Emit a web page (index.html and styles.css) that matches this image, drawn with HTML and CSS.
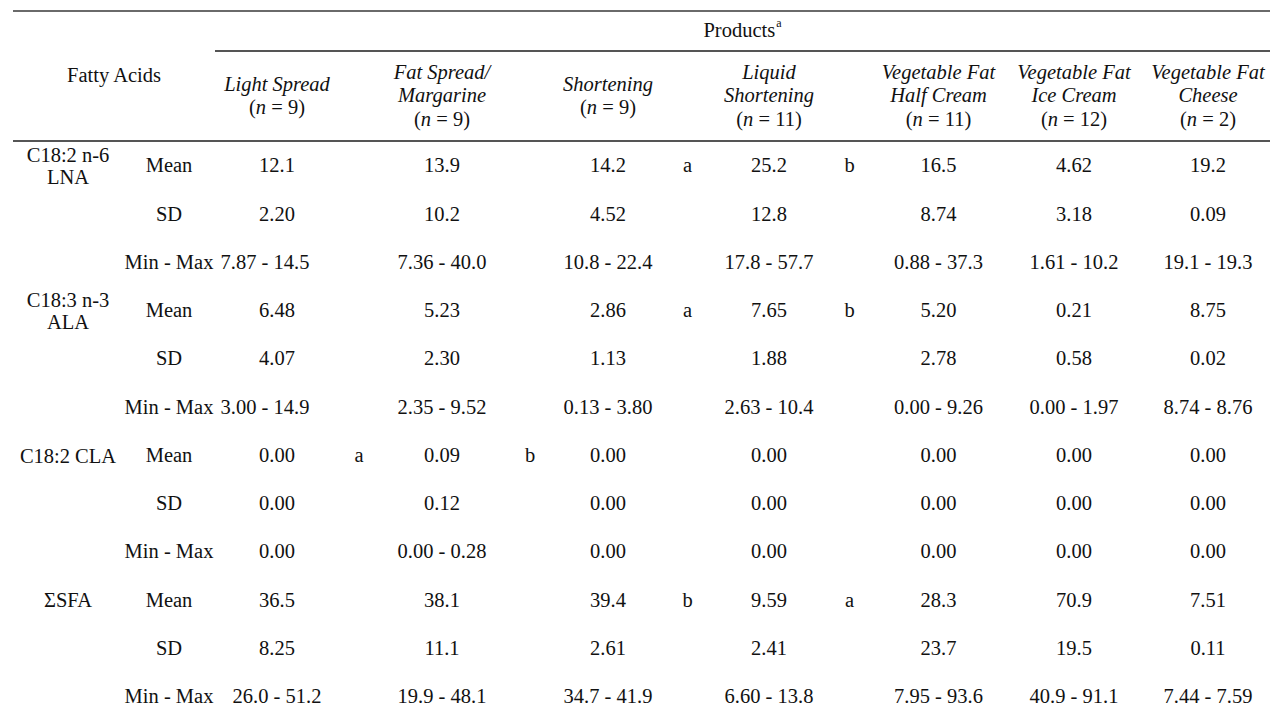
FILE: index.html
```html
<!DOCTYPE html>
<html lang="en">
<head>
<meta charset="utf-8">
<title>Fatty acids by product</title>
<link rel="stylesheet" href="styles.css">
</head>
<body>
<div class="grid">
  <div class="cell hd fatty">Fatty Acids</div>
  <div class="cell products">Products<span class="sup">a</span></div>

  <div class="cell hd"><span><em>Light Spread</em><br>(<em>n</em> = 9)</span></div>
  <div class="cell hd"></div>
  <div class="cell hd"><span><em>Fat Spread/</em><br><em>Margarine</em><br>(<em>n</em> = 9)</span></div>
  <div class="cell hd"></div>
  <div class="cell hd"><span><em>Shortening</em><br>(<em>n</em> = 9)</span></div>
  <div class="cell hd"></div>
  <div class="cell hd"><span><em>Liquid</em><br><em>Shortening</em><br>(<em>n</em> = 11)</span></div>
  <div class="cell hd"></div>
  <div class="cell hd"><span><em>Vegetable Fat</em><br><em>Half Cream</em><br>(<em>n</em> = 11)</span></div>
  <div class="cell hd"><span><em>Vegetable Fat</em><br><em>Ice Cream</em><br>(<em>n</em> = 12)</span></div>
  <div class="cell hd"><span><em>Vegetable Fat</em><br><em>Cheese</em><br>(<em>n</em> = 2)</span></div>

  <!-- C18:2 n-6 LNA -->
  <div class="cell label">C18:2 n-6<br>LNA</div>
  <div class="cell">Mean</div>
  <div class="cell">12.1</div><div class="cell"></div>
  <div class="cell">13.9</div><div class="cell"></div>
  <div class="cell">14.2</div><div class="cell">a</div>
  <div class="cell">25.2</div><div class="cell">b</div>
  <div class="cell">16.5</div><div class="cell">4.62</div><div class="cell">19.2</div>

  <div class="cell"></div>
  <div class="cell">SD</div>
  <div class="cell">2.20</div><div class="cell"></div>
  <div class="cell">10.2</div><div class="cell"></div>
  <div class="cell">4.52</div><div class="cell"></div>
  <div class="cell">12.8</div><div class="cell"></div>
  <div class="cell">8.74</div><div class="cell">3.18</div><div class="cell">0.09</div>

  <div class="cell"></div>
  <div class="cell">Min - Max</div>
  <div class="cell shift">7.87 - 14.5</div><div class="cell"></div>
  <div class="cell">7.36 - 40.0</div><div class="cell"></div>
  <div class="cell">10.8 - 22.4</div><div class="cell"></div>
  <div class="cell">17.8 - 57.7</div><div class="cell"></div>
  <div class="cell">0.88 - 37.3</div><div class="cell">1.61 - 10.2</div><div class="cell">19.1 - 19.3</div>

  <!-- C18:3 n-3 ALA -->
  <div class="cell label">C18:3 n-3<br>ALA</div>
  <div class="cell">Mean</div>
  <div class="cell">6.48</div><div class="cell"></div>
  <div class="cell">5.23</div><div class="cell"></div>
  <div class="cell">2.86</div><div class="cell">a</div>
  <div class="cell">7.65</div><div class="cell">b</div>
  <div class="cell">5.20</div><div class="cell">0.21</div><div class="cell">8.75</div>

  <div class="cell"></div>
  <div class="cell">SD</div>
  <div class="cell">4.07</div><div class="cell"></div>
  <div class="cell">2.30</div><div class="cell"></div>
  <div class="cell">1.13</div><div class="cell"></div>
  <div class="cell">1.88</div><div class="cell"></div>
  <div class="cell">2.78</div><div class="cell">0.58</div><div class="cell">0.02</div>

  <div class="cell"></div>
  <div class="cell">Min - Max</div>
  <div class="cell shift">3.00 - 14.9</div><div class="cell"></div>
  <div class="cell">2.35 - 9.52</div><div class="cell"></div>
  <div class="cell">0.13 - 3.80</div><div class="cell"></div>
  <div class="cell">2.63 - 10.4</div><div class="cell"></div>
  <div class="cell">0.00 - 9.26</div><div class="cell">0.00 - 1.97</div><div class="cell">8.74 - 8.76</div>

  <!-- C18:2 CLA -->
  <div class="cell label">C18:2 CLA</div>
  <div class="cell">Mean</div>
  <div class="cell">0.00</div><div class="cell">a</div>
  <div class="cell">0.09</div><div class="cell">b</div>
  <div class="cell">0.00</div><div class="cell"></div>
  <div class="cell">0.00</div><div class="cell"></div>
  <div class="cell">0.00</div><div class="cell">0.00</div><div class="cell">0.00</div>

  <div class="cell"></div>
  <div class="cell">SD</div>
  <div class="cell">0.00</div><div class="cell"></div>
  <div class="cell">0.12</div><div class="cell"></div>
  <div class="cell">0.00</div><div class="cell"></div>
  <div class="cell">0.00</div><div class="cell"></div>
  <div class="cell">0.00</div><div class="cell">0.00</div><div class="cell">0.00</div>

  <div class="cell"></div>
  <div class="cell">Min - Max</div>
  <div class="cell">0.00</div><div class="cell"></div>
  <div class="cell">0.00 - 0.28</div><div class="cell"></div>
  <div class="cell">0.00</div><div class="cell"></div>
  <div class="cell">0.00</div><div class="cell"></div>
  <div class="cell">0.00</div><div class="cell">0.00</div><div class="cell">0.00</div>

  <!-- ΣSFA -->
  <div class="cell label">ΣSFA</div>
  <div class="cell">Mean</div>
  <div class="cell">36.5</div><div class="cell"></div>
  <div class="cell">38.1</div><div class="cell"></div>
  <div class="cell">39.4</div><div class="cell">b</div>
  <div class="cell">9.59</div><div class="cell">a</div>
  <div class="cell">28.3</div><div class="cell">70.9</div><div class="cell">7.51</div>

  <div class="cell"></div>
  <div class="cell">SD</div>
  <div class="cell">8.25</div><div class="cell"></div>
  <div class="cell">11.1</div><div class="cell"></div>
  <div class="cell">2.61</div><div class="cell"></div>
  <div class="cell">2.41</div><div class="cell"></div>
  <div class="cell">23.7</div><div class="cell">19.5</div><div class="cell">0.11</div>

  <div class="cell"></div>
  <div class="cell">Min - Max</div>
  <div class="cell">26.0 - 51.2</div><div class="cell"></div>
  <div class="cell">19.9 - 48.1</div><div class="cell"></div>
  <div class="cell">34.7 - 41.9</div><div class="cell"></div>
  <div class="cell">6.60 - 13.8</div><div class="cell"></div>
  <div class="cell">7.95 - 93.6</div><div class="cell">40.9 - 91.1</div><div class="cell">7.44 - 7.59</div>
</div>
</body>
</html>
```

FILE: styles.css
```css
html, body {
  margin: 0;
  padding: 0;
  background: #ffffff;
}

body {
  font-family: "Liberation Serif", "Times New Roman", serif;
  font-size: 20.5px;
  line-height: 23.5px;
  color: #111111;
}

.grid {
  display: grid;
  width: 1257px;
  margin: 10px 0 0 13px;
  grid-template-columns: 110px 92px 124px 40px 126px 50px 106px 53px 110px 51px 127px 144px 124px;
  grid-template-rows: 40px 90px repeat(12, 48.25px);
  border-top: 2px solid #6a6a6a;
  overflow: hidden;
}

.cell {
  display: flex;
  align-items: center;
  justify-content: center;
  text-align: center;
  white-space: nowrap;
  box-sizing: border-box;
  min-width: 0;
}

.hd {
  border-bottom: 2px solid #555555;
}

.fatty {
  grid-column: 1 / 3;
  grid-row: 1 / 3;
}

.products {
  grid-column: 3 / 14;
  grid-row: 1;
  border-bottom: 2px solid #555555;
}

.sup {
  font-size: 12px;
  line-height: 0;
  position: relative;
  top: -8px;
  margin-left: 1px;
}

em {
  font-style: italic;
}

.label {
  line-height: 22px;
}

.shift {
  padding-right: 24px;
}
```
